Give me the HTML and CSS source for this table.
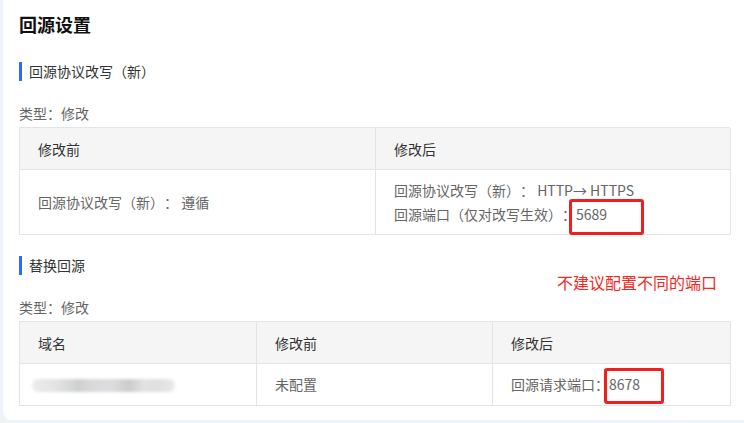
FILE: index.html
```html
<!DOCTYPE html>
<html lang="zh-CN">
<head>
<meta charset="utf-8">
<link rel="stylesheet" href="styles.css">
</head>
<body>
<div class="card">
  <h1 class="title">回源设置</h1>

  <div class="sec">回源协议改写（新）</div>
  <div class="type">类型：修改</div>
  <div class="tbl cols-2">
    <div class="cell head">修改前</div>
    <div class="cell head">修改后</div>
    <div class="cell body tall center">回源协议改写（新）： 遵循</div>
    <div class="cell body tall lines">
      <div>回源协议改写（新）： HTTP→ HTTPS</div>
      <div>回源端口（仅对改写生效）：<span class="mark m1">5689</span></div>
    </div>
  </div>

  <div class="sec sec2">替换回源</div>
  <div class="note">不建议配置不同的端口</div>
  <div class="type">类型：修改</div>
  <div class="tbl cols-3">
    <div class="cell head">域名</div>
    <div class="cell head">修改前</div>
    <div class="cell head">修改后</div>
    <div class="cell body"><div class="blur"></div></div>
    <div class="cell body">未配置</div>
    <div class="cell body">回源请求端口：<span class="mark m2">8678</span></div>
  </div>
</div>
</body>
</html>
```

FILE: styles.css
```css
* { box-sizing: border-box; }
html, body { margin: 0; padding: 0; }
body {
  background: #eef2f9;
  font-family: "Noto Sans CJK SC", "Liberation Sans", sans-serif;
  font-size: 14px;
  color: #666;
  width: 744px;
  height: 423px;
  overflow: hidden;
  text-spacing-trim: space-all;
}
.card {
  position: relative;
  margin-left: 3px;
  height: 420px;
  background: #fff;
  border-bottom-left-radius: 8px;
  padding: 12px 14px 0 16px;
}
.title {
  margin: 0;
  font-size: 18px;
  line-height: 24px;
  font-weight: bold;
  color: #111;
}
.sec {
  margin-top: 26px;
  border-left: 3px solid #2f6bff;
  padding-left: 7px;
  line-height: 19px;
  height: 19px;
  color: #333;
  font-size: 14px;
}
.sec2 { margin-top: 21px; }
.type {
  margin-top: 22px;
  line-height: 20px;
  color: #666;
}
.tbl {
  margin-top: 4px;
  display: grid;
  border-top: 1px solid #e4e4e4;
  border-left: 1px solid #e4e4e4;
}
.cols-2 { grid-template-columns: 356px 355px; }
.cols-3 { grid-template-columns: 237px 236px 238px; }
.cell {
  border-right: 1px solid #e4e4e4;
  border-bottom: 1px solid #e4e4e4;
  padding: 11px 18px 9px 18px;
  line-height: 21px;
}
.head {
  background: #f5f5f5;
  color: #333;
}
.body { color: #666; padding: 10px 18px 10px 18px; }
.tall { height: 65px; }
.center { display: flex; align-items: center; padding-top: 1px; padding-bottom: 0; }
.lines { padding-top: 8px; padding-bottom: 8px; line-height: 24px; }
.mark {
  position: relative;
  display: inline-block;
}
.mark::after {
  content: "";
  position: absolute;
  top: -4px;
  height: 30px;
  border: 3px solid #f21d1d;
  border-radius: 3px;
}
.m1::after { left: -7px; width: 69px; top: -3px; }
.m2::after { left: -5px; width: 54px; top: -6px; }
.note {
  position: absolute;
  left: 554px;
  top: 272px;
  font-size: 16px;
  line-height: 20px;
  color: #f5281e;
}
.blur {
  margin-top: 5px;
  margin-left: -6px;
  width: 143px;
  height: 13px;
  border-radius: 6px;
  background: linear-gradient(90deg, #ececec 0%, #e4e4e4 15%, #d8dadc 25%, #cfcfcf 32%, #d9d9d9 42%, #dcdde0 55%, #cdcccb 68%, #e2e2e2 78%, #dedfe2 88%, #ebebeb 100%);
  filter: blur(1.5px);
}
```
